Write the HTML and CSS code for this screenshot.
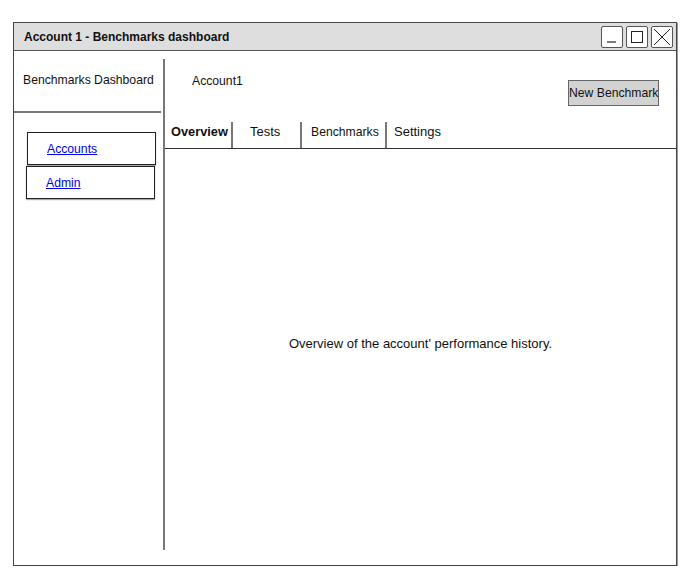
FILE: index.html
```html
<!DOCTYPE html>
<html>
<head>
<meta charset="utf-8">
<link rel="stylesheet" href="styles.css">
</head>
<body>
<div class="window">
  <div class="titlebar">
    <span class="title">Account 1 - Benchmarks dashboard</span>
    <div class="winbtns">
      <span class="wbtn"><svg width="20" height="20" viewBox="0 0 20 20"><line x1="5" y1="15" x2="14" y2="15" stroke="#222" stroke-width="1.2"/></svg></span>
      <span class="wbtn"><svg width="20" height="20" viewBox="0 0 20 20"><rect x="4.5" y="4.5" width="11" height="11" fill="none" stroke="#222" stroke-width="1"/></svg></span>
      <span class="wbtn"><svg width="20" height="20" viewBox="0 0 20 20"><path d="M2 2 L18 18 M18 2 L2 18" stroke="#222" stroke-width="1"/></svg></span>
    </div>
  </div>
  <div class="content">
    <aside class="sidebar">
      <div class="brand">Benchmarks Dashboard</div>
      <nav class="nav">
        <div class="navitem"><a href="#">Accounts</a></div>
        <div class="navitem second"><a href="#">Admin</a></div>
      </nav>
    </aside>
    <main class="main">
      <div class="header">
        <span class="account">Account1</span>
        <button class="newbtn">New Benchmark</button>
      </div>
      <div class="tabs">
        <span class="tab active">Overview</span>
        <span class="tab t2">Tests</span>
        <span class="tab t3">Benchmarks</span>
        <span class="tab t4">Settings</span>
      </div>
      <div class="panel">
        <p class="desc">Overview of the account' performance history.</p>
      </div>
    </main>
  </div>
</div>
</body>
</html>
```
FILE: styles.css
```css
html, body {
  margin: 0;
  padding: 0;
  background: #fff;
}
body {
  font-family: "Liberation Sans", Arial, sans-serif;
  font-size: 12.2px;
  color: #111;
}
.window {
  margin: 22px 0 0 13px;
  width: 662px;
  height: 542px;
  border: 1px solid #444;
  box-shadow: 1px 1px 0 #999;
  display: flex;
  flex-direction: column;
}
.titlebar {
  height: 27px;
  background: #dedede;
  border-bottom: 1px solid #555;
  display: flex;
  align-items: center;
  justify-content: space-between;
  padding: 0 3px 0 10px;
}
.title {
  font-weight: bold;
  font-size: 12px;
}
.winbtns {
  display: flex;
  gap: 3px;
}
.wbtn {
  width: 20px;
  height: 20px;
  border: 1px solid #555;
  border-radius: 2px;
  background: #fff;
  display: block;
}
.wbtn svg { display: block; width: 20px; height: 20px; }
.content {
  flex: 1;
  display: flex;
}
.sidebar {
  width: 149px;
  margin: 8px 0 15px;
  border-right: 2px solid #777;
  display: flex;
  flex-direction: column;
}
.brand {
  height: 54px;
  border-bottom: 2px solid #777;
  padding: 14px 0 0 9px;
  box-sizing: border-box;
  margin-right: 2px;
  white-space: nowrap;
}
.nav {
  padding: 19px 0 0 13px;
}
.navitem {
  height: 31px;
  border: 1px solid #222;
  box-shadow: 0 1px 1px #aaa;
  display: flex;
  align-items: center;
  padding-left: 19px;
  width: 108px;
}
.navitem.second {
  margin: 1px 0 0 -1px;
}
.navitem a {
  color: #0000ee;
  text-decoration: underline;
}
.main {
  flex: 1;
  display: flex;
  flex-direction: column;
}
.header {
  height: 71px;
  display: flex;
  justify-content: space-between;
  align-items: flex-start;
  padding: 22px 17px 0 27px;
  box-sizing: border-box;
}
.account {
  padding-top: 1px;
}
.newbtn {
  margin-top: 7px;
  height: 26px;
  padding: 0;
  font: inherit;
  color: #111;
  background: #d2d2d2;
  border: 1px solid #666;
  border-radius: 0;
  width: 91px;
  white-space: nowrap;
}
.tabs {
  height: 26px;
  display: flex;
  align-items: center;
  border-bottom: 1px solid #333;
}
.tab {
  height: 26px;
  display: flex;
  align-items: flex-start;
  padding-top: 3px;
  border-right: 2px solid #777;
  box-sizing: border-box;
}
.tab.active {
  font-weight: bold;
  font-size: 12.8px;
  width: 68px;
  padding-left: 6px;
  padding-top: 2px;
}
.tab.t2 { width: 69px; padding-left: 17px; font-size: 13px; padding-top: 2px; }
.tab.t3 { width: 85px; padding-left: 9px; }
.tab.t4 { border-right: none; padding-left: 7px; font-size: 13px; padding-top: 2px; }
.panel {
  flex: 1;
  display: flex;
  justify-content: center;
}
.desc {
  margin: 187px 0 0 0;
  font-size: 13px;
}
```
